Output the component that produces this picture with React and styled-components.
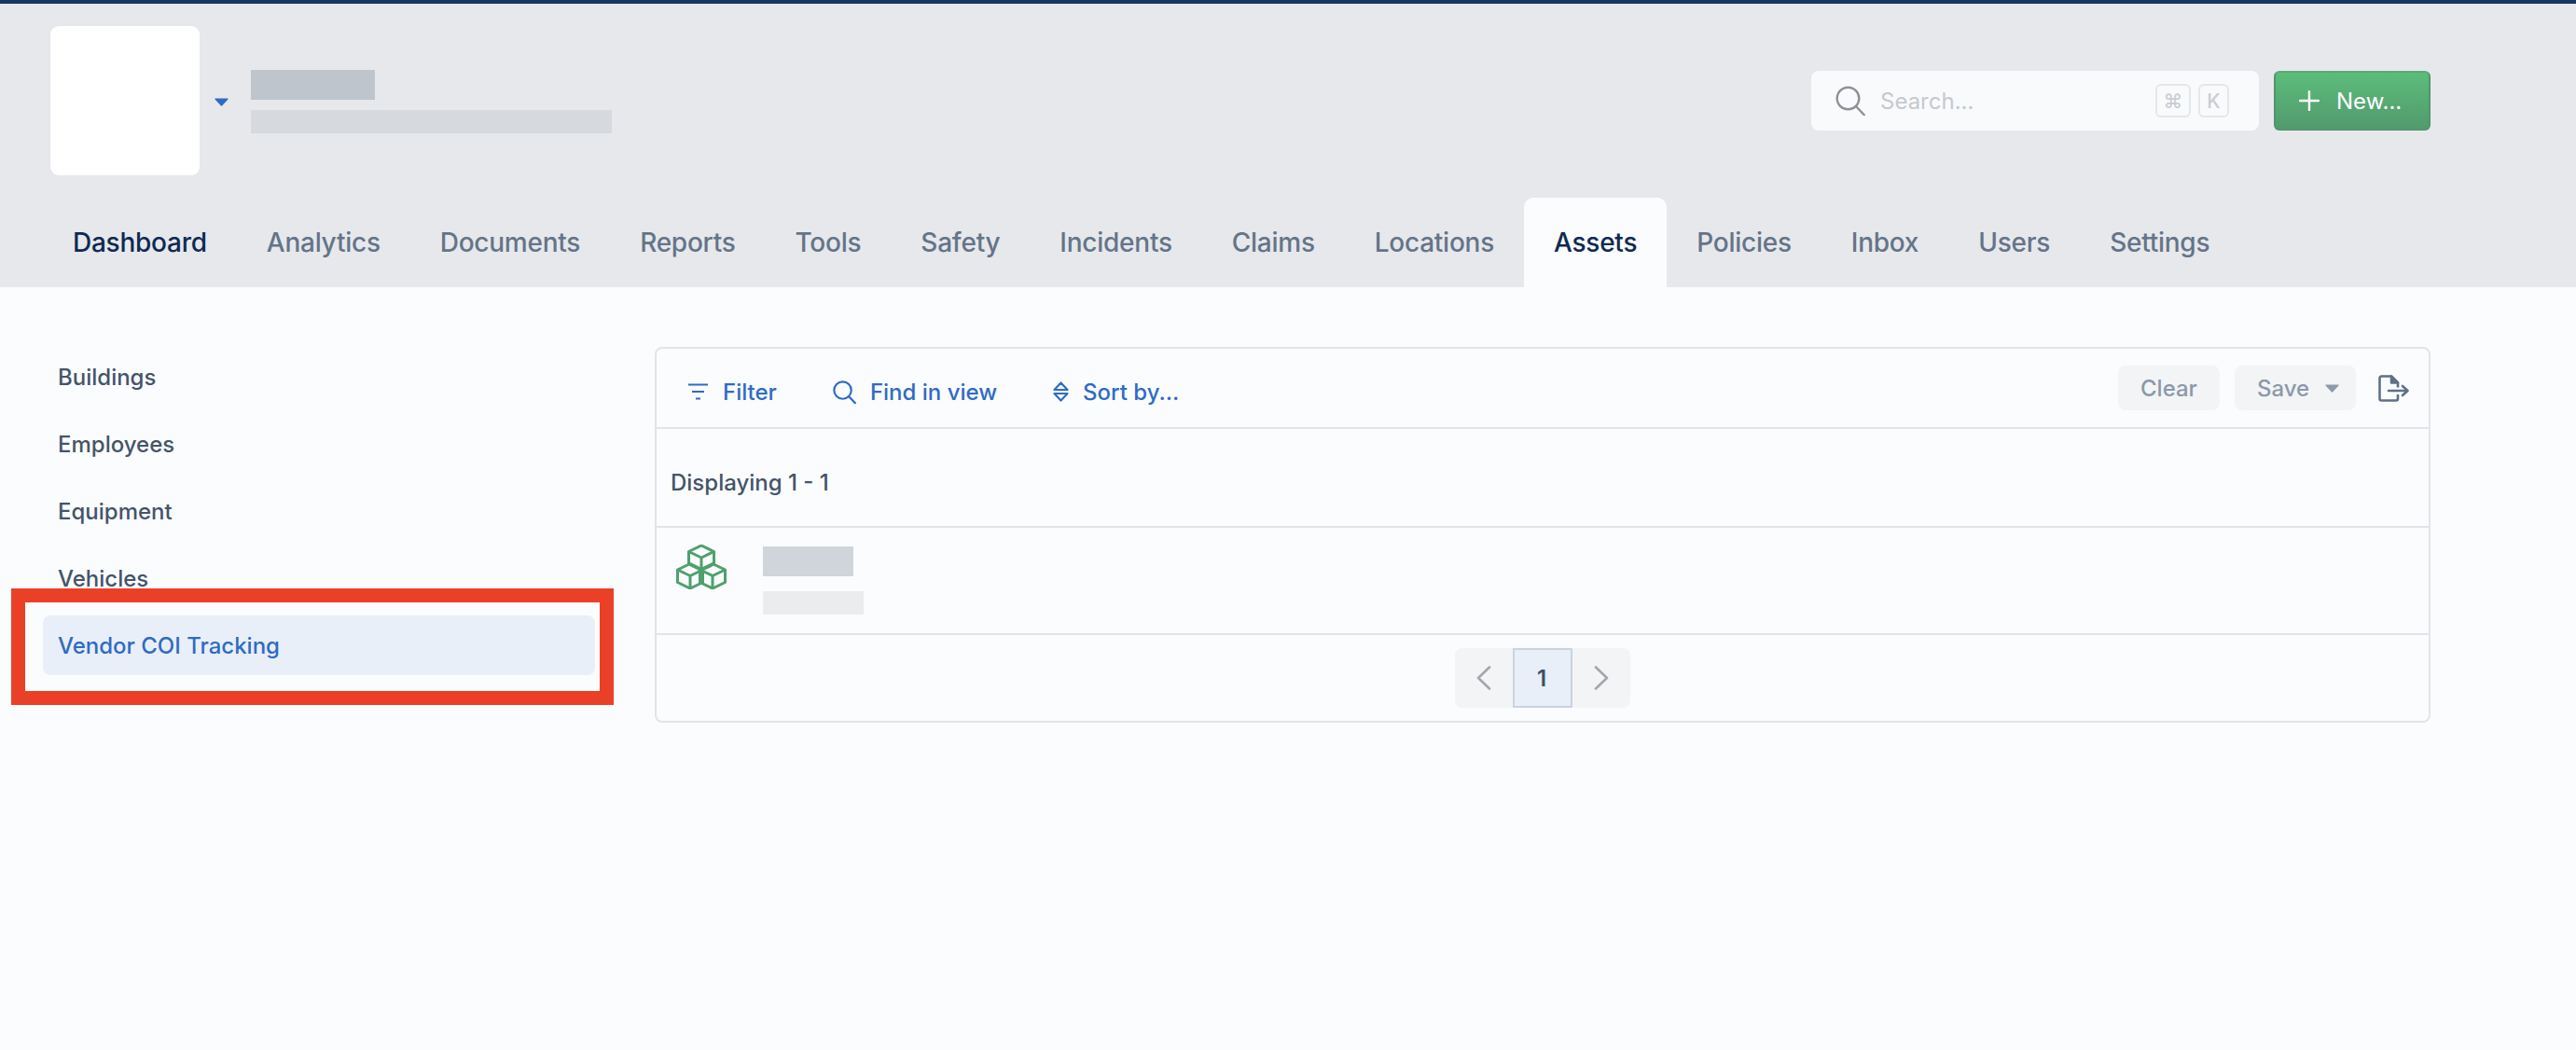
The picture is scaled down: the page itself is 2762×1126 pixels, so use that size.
import React from "react";
import styled, { createGlobalStyle } from "styled-components";

const Global = createGlobalStyle`
  html, body {
    margin: 0;
    padding: 0;
    background: #fbfcfe;
    font-family: "Inter", "Liberation Sans", sans-serif;
  }
  * {
    box-sizing: border-box;
  }
`;

const Page = styled.div`
  min-height: 1126px;
  background: #fbfcfe;
  border-top: 4px solid #1a365f;
`;

const Header = styled.header`
  height: 304px;
  background: #e6e8ec;
  padding: 24px 156px 0 54px;
  display: flex;
  flex-direction: column;
  gap: 24px;
`;

const TopRow = styled.div`
  display: flex;
  align-items: center;
  justify-content: space-between;
`;

const Brand = styled.div`
  display: flex;
  align-items: center;
`;

const Logo = styled.div`
  width: 160px;
  height: 160px;
  background: #fff;
  border-radius: 9px;
`;

const CaretButton = styled.div`
  display: flex;
  margin: 2px 24px 0 16px;
`;

const BrandText = styled.div`
  display: flex;
  flex-direction: column;
  gap: 11px;
  margin-top: 2px;
`;

const Redacted = styled.div`
  width: ${(p) => p.$w}px;
  height: ${(p) => p.$h}px;
  background: ${(p) => p.$color};
`;

const Actions = styled.div`
  display: flex;
  gap: 16px;
`;

const Search = styled.div`
  width: 480px;
  height: 64px;
  background: #f9fafb;
  border-radius: 8px;
  padding: 0 32px 0 26px;
  display: flex;
  align-items: center;
`;

const Placeholder = styled.span`
  flex: 1;
  margin-left: 16px;
  font-size: 24px;
  color: #c5c9cf;
`;

const Keys = styled.div`
  display: flex;
  gap: 8px;
`;

const Key = styled.kbd`
  height: 36px;
  min-width: ${(p) => p.$w}px;
  border: 2px solid #e5e7ea;
  border-radius: 6px;
  font-family: "Inter", "DejaVu Sans", sans-serif;
  font-size: 21px;
  font-weight: 500;
  color: #c9cdd3;
  display: flex;
  align-items: center;
  justify-content: center;
`;

const NewButton = styled.div`
  width: 168px;
  height: 64px;
  border-radius: 6px;
  background: linear-gradient(#5cbc7b, #529a6d);
  border: 2px solid #52946c;
  border-top-color: #58ac76;
  color: #fff;
  font-size: 24px;
  font-weight: 400;
  padding-left: 25px;
  display: flex;
  align-items: center;
  gap: 18px;
`;

const Tabs = styled.nav`
  display: flex;
  height: 96px;
  margin-left: -8px;
`;

const Tab = styled.div`
  padding: 0 32px;
  display: flex;
  align-items: center;
  font-size: 28px;
  font-weight: 500;
  letter-spacing: -0.25px;
  color: ${(p) => (p.$active ? "#0f2a52" : "#657488")};
  background: ${(p) => (p.$selected ? "#fbfcfe" : "transparent")};
  border-radius: 10px 10px 0 0;
`;

const Main = styled.main`
  display: flex;
  gap: 64px;
  padding: 64px 156px 0 46px;
`;

const Sidebar = styled.aside`
  width: 592px;
  flex: none;
  display: flex;
  flex-direction: column;
  gap: 8px;
`;

const SideItem = styled.div`
  position: relative;
  height: 64px;
  padding: 0 16px;
  border-radius: 8px;
  display: flex;
  align-items: center;
  font-size: 24px;
  font-weight: 500;
  color: ${(p) => (p.$active ? "#2f6bc5" : "#44546a")};
  background: ${(p) => (p.$active ? "#e9eff9" : "transparent")};
`;

const Highlight = styled.div`
  position: absolute;
  top: -29px;
  bottom: -32px;
  left: -34px;
  right: -20px;
  border: 15px solid #ea4027;
  pointer-events: none;
`;

const Panel = styled.section`
  flex: 1;
  height: 403px;
  border: 2px solid #e2e4e8;
  border-radius: 8px;
  display: flex;
  flex-direction: column;
`;

const Toolbar = styled.div`
  height: 86px;
  padding: 0 21px 0 34px;
  display: flex;
  align-items: center;
  justify-content: space-between;
  border-bottom: 2px solid #e2e4e8;
`;

const ToolGroup = styled.div`
  display: flex;
  align-items: center;
  gap: ${(p) => p.$gap}px;
`;

const ToolLinks = styled(ToolGroup)`
  margin-top: 8px;
`;

const ToolLink = styled.div`
  display: flex;
  align-items: center;
  gap: 15px;
  font-size: 24px;
  font-weight: 500;
  color: #2f6bc5;
`;

const GhostButton = styled.div`
  height: 48px;
  width: ${(p) => p.$w}px;
  padding-left: 24px;
  background: #f3f4f6;
  border-radius: 8px;
  color: #8c99a9;
  font-size: 24px;
  font-weight: 500;
  display: flex;
  align-items: center;
  gap: 17px;
`;

const ExportSlot = styled.div`
  display: flex;
  margin-left: 8px;
`;

const CountRow = styled.div`
  height: 106px;
  padding: 10px 0 0 15px;
  display: flex;
  align-items: center;
  border-bottom: 2px solid #e2e4e8;
  font-size: 24px;
  font-weight: 500;
  color: #44546a;
`;

const AssetRow = styled.div`
  height: 115px;
  padding: 18px 0 0 21px;
  display: flex;
  gap: 39px;
  border-bottom: 2px solid #e2e4e8;
`;

const AssetText = styled.div`
  display: flex;
  flex-direction: column;
  gap: 16px;
  padding-top: 2px;
`;

const Footer = styled.div`
  flex: 1;
  display: flex;
  align-items: center;
  justify-content: center;
`;

const Pagination = styled.div`
  width: 188px;
  height: 64px;
  background: #f3f4f6;
  border-radius: 8px;
  display: grid;
  grid-template-columns: 62px 64px 62px;
`;

const PageArrow = styled.div`
  display: flex;
  align-items: center;
  justify-content: center;
`;

const PageNumber = styled.div`
  background: #e8eff9;
  border: 2px solid #c8d3e0;
  padding-right: 2px;
  display: flex;
  align-items: center;
  justify-content: center;
  font-size: 24px;
  font-weight: 600;
  color: #3f5068;
`;

const tabs = [
  "Dashboard",
  "Analytics",
  "Documents",
  "Reports",
  "Tools",
  "Safety",
  "Incidents",
  "Claims",
  "Locations",
  "Assets",
  "Policies",
  "Inbox",
  "Users",
  "Settings",
];

const sideItems = ["Buildings", "Employees", "Equipment", "Vehicles", "Vendor COI Tracking"];

const Caret = ({ color }) => (
  <svg width="15" height="9" viewBox="0 0 15 9">
    <path d="M1 0.5h13a.6.6 0 0 1 .5 1L8 8.5a.7.7 0 0 1-1 0L.5 1.5A.6.6 0 0 1 1 .5z" fill={color} />
  </svg>
);

const SearchIcon = ({ size, color, width }) => (
  <svg width={size} height={size} viewBox="0 0 32 32" fill="none" stroke={color} strokeWidth={width}>
    <circle cx="13.5" cy="13.5" r="11.8" />
    <path d="M22 22l9 9.5" strokeLinecap="round" />
  </svg>
);

const PlusIcon = () => (
  <svg width="22" height="22" viewBox="0 0 22 22" stroke="#fff" strokeWidth="2.4" strokeLinecap="round">
    <path d="M11 1v20M1 11h20" />
  </svg>
);

const FilterIcon = () => (
  <svg width="22" height="18" viewBox="0 0 22 18" fill="none" stroke="#2f6bc5" strokeWidth="2.2">
    <path d="M0 1.5h21M4 9h13M8 16.5h5" />
  </svg>
);

const SortIcon = () => (
  <svg width="17" height="22" viewBox="0 0 17 22" fill="none" stroke="#2f6bc5" strokeWidth="2.2" strokeLinejoin="round">
    <path d="M8.5 1.5L15.5 9H1.5zM1.5 13h14L8.5 20.5z" />
  </svg>
);

const ExportIcon = () => (
  <svg width="33" height="29" viewBox="0 0 33 29" fill="none" stroke="#5f7186" strokeWidth="2.6" strokeLinejoin="round">
    <path d="M21 21v4.5a2 2 0 0 1-2 2H3.5a2 2 0 0 1-2-2v-22a2 2 0 0 1 2-2H14l7 7v5" />
    <path d="M14 1.5l7 7h-7z" fill="#5f7186" />
    <path d="M11 17h20M26 12l5.5 5-5.5 5" strokeLinecap="round" />
  </svg>
);

const cubes = [
  [13.5, 1],
  [1.5, 20.5],
  [25.5, 20.5],
];

const CubesIcon = () => (
  <svg width="54" height="48" viewBox="0 0 54 48" fill="none" stroke="#4fa06d" strokeWidth="3" strokeLinejoin="round">
    {cubes.map(([x, y]) => (
      <g key={`${x}-${y}`} transform={`translate(${x} ${y})`}>
        <path d="M13.5 0L27 6.5V20L13.5 26.5L0 20V6.5z" />
        <path d="M0 6.5L13.5 13L27 6.5M13.5 13V26.5" />
      </g>
    ))}
  </svg>
);

const Chevron = ({ flip }) => (
  <svg width="16" height="26" viewBox="0 0 16 26" fill="none" stroke="#a3a7ac" strokeWidth="2.6" strokeLinecap="round" strokeLinejoin="round">
    <path d={flip ? "M2 1.5L14 13L2 24.5" : "M14 1.5L2 13L14 24.5"} />
  </svg>
);

export default function App() {
  return (
    <Page>
      <Global />
      <Header>
        <TopRow>
          <Brand>
            <Logo />
            <CaretButton>
              <Caret color="#2f6bc5" />
            </CaretButton>
            <BrandText>
              <Redacted $w={133} $h={32} $color="#bec5cd" />
              <Redacted $w={387} $h={25} $color="#d6d9de" />
            </BrandText>
          </Brand>
          <Actions>
            <Search>
              <SearchIcon size={32} color="#8e9297" width={2.4} />
              <Placeholder>Search...</Placeholder>
              <Keys>
                <Key $w={38}>⌘</Key>
                <Key $w={33}>K</Key>
              </Keys>
            </Search>
            <NewButton>
              <PlusIcon />
              New...
            </NewButton>
          </Actions>
        </TopRow>
        <Tabs>
          {tabs.map((t) => (
            <Tab key={t} $active={t === "Dashboard" || t === "Assets"} $selected={t === "Assets"}>
              {t}
            </Tab>
          ))}
        </Tabs>
      </Header>
      <Main>
        <Sidebar>
          {sideItems.map((item) => {
            const active = item === "Vendor COI Tracking";
            return (
              <SideItem key={item} $active={active}>
                {item}
                {active && <Highlight />}
              </SideItem>
            );
          })}
        </Sidebar>
        <Panel>
          <Toolbar>
            <ToolLinks $gap={60}>
              <ToolLink>
                <FilterIcon />
                Filter
              </ToolLink>
              <ToolLink>
                <SearchIcon size={25} color="#2f6bc5" width={2.8} />
                Find in view
              </ToolLink>
              <ToolLink>
                <SortIcon />
                Sort by...
              </ToolLink>
            </ToolLinks>
            <ToolGroup $gap={16}>
              <GhostButton $w={109}>Clear</GhostButton>
              <GhostButton $w={130}>
                Save
                <Caret color="#8c99a9" />
              </GhostButton>
              <ExportSlot>
                <ExportIcon />
              </ExportSlot>
            </ToolGroup>
          </Toolbar>
          <CountRow>Displaying 1 - 1</CountRow>
          <AssetRow>
            <CubesIcon />
            <AssetText>
              <Redacted $w={97} $h={32} $color="#d0d5db" />
              <Redacted $w={108} $h={25} $color="#ebecee" />
            </AssetText>
          </AssetRow>
          <Footer>
            <Pagination>
              <PageArrow>
                <Chevron />
              </PageArrow>
              <PageNumber>1</PageNumber>
              <PageArrow>
                <Chevron flip />
              </PageArrow>
            </Pagination>
          </Footer>
        </Panel>
      </Main>
    </Page>
  );
}
